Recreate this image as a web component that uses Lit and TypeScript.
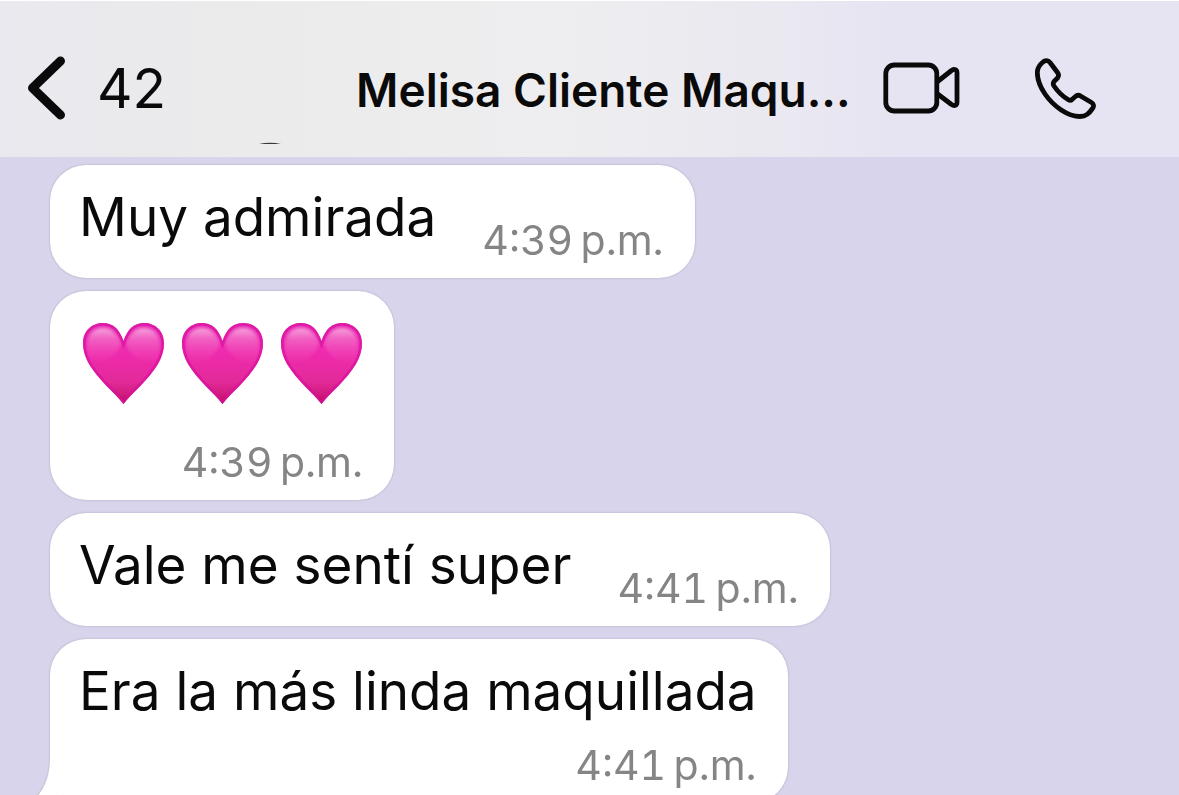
import { LitElement, html, css, svg } from "lit";
import { customElement, property } from "lit/decorators.js";

interface Message {
  text?: string;
  hearts?: number;
  time: string;
  stacked?: boolean;
  tail?: boolean;
}

const MESSAGES: Message[] = [
  { text: "Muy admirada", time: "4:39\u202fp.m." },
  { hearts: 3, time: "4:39\u202fp.m.", stacked: true },
  { text: "Vale me sentí super", time: "4:41\u202fp.m." },
  { text: "Era la más linda maquillada", time: "4:41\u202fp.m.", stacked: true, tail: true },
];

@customElement("pink-heart")
export class PinkHeart extends LitElement {
  static styles = css`
    :host {
      display: block;
      width: 81px;
      height: 82px;
    }
    .heart {
      display: block;
      width: 100%;
      height: 100%;
    }
  `;

  render() {
    const shape =
      "M40.500 82C32 71 15.500 58 6 42C2 35 0 28 0 21.500C0 8.500 9 1 20 1C30 1 36.500 7 40.500 19C44.500 7 51 1 61 1C72 1 81 8.500 81 21.500C81 28 79 35 75 42C65.500 58 49 71 40.500 82Z";
    return html`<svg class="heart" viewBox="0 0 81 82" role="img" aria-label="Corazón rosa">
      ${svg`
        <defs>
          <linearGradient id="base" x1="0" y1="0" x2="0" y2="1">
            <stop offset="0" stop-color="#e834b6" />
            <stop offset="0.4" stop-color="#ee2aac" />
            <stop offset="0.72" stop-color="#e32a9a" />
            <stop offset="0.88" stop-color="#d01c7e" />
            <stop offset="1" stop-color="#b80852" />
          </linearGradient>
          <linearGradient id="gloss" x1="0" y1="0" x2="0" y2="1">
            <stop offset="0" stop-color="#fff" stop-opacity="0.56" />
            <stop offset="0.3" stop-color="#ffc8e8" stop-opacity="0.32" />
            <stop offset="1" stop-color="#ff80cc" stop-opacity="0" />
          </linearGradient>
          <clipPath id="clip"><path d=${shape} /></clipPath>
          <filter id="soft" x="-20%" y="-20%" width="140%" height="140%"><feGaussianBlur stdDeviation="1.6" /></filter>
          <filter id="rim" x="-20%" y="-20%" width="140%" height="140%"><feGaussianBlur stdDeviation="0.7" /></filter>
        </defs>
        <path d=${shape} fill="url(#base)" />
        <g clip-path="url(#clip)">
          <g filter="url(#soft)">
            <path d="M4 24C4 12 11 6 20 6C29 6 34 12 38 21C36 32 22 42 9 42C5 36 4 29 4 24Z" fill="url(#gloss)" />
            <path d="M77 24C77 12 70 6 61 6C52 6 47 12 43 21C45 32 59 42 72 42C76 36 77 29 77 24Z" fill="url(#gloss)" />
          </g>
          <path d=${shape} fill="none" stroke="#d80b9f" stroke-width="5" stroke-opacity="0.7" filter="url(#rim)" />
        </g>
      `}
    </svg>`;
  }
}

@customElement("chat-bubble")
export class ChatBubble extends LitElement {
  @property({ attribute: false }) message!: Message;

  static styles = css`
    :host {
      display: block;
      position: relative;
      filter: drop-shadow(0 0 1px rgba(120, 112, 140, 0.45));
    }
    .bubble {
      display: flex;
      align-items: flex-end;
      gap: 46px;
      padding: 18px 31px 15px 29px;
      border-radius: 36px;
      background: #fff;
    }
    .stacked {
      flex-direction: column;
      gap: 0;
    }
    .text {
      margin: 0 0 12px;
      font-size: 53px;
      line-height: 68px;
      color: #0a0a0a;
      white-space: nowrap;
    }
    .stacked .text {
      margin-bottom: 17px;
    }
    .hearts {
      display: flex;
      gap: 18px;
      padding: 13px 1px 35px 4px;
    }
    .time {
      font-size: 41px;
      line-height: 46px;
      font-variant-numeric: tabular-nums;
      color: #858585;
      white-space: nowrap;
    }
    .tail {
      position: absolute;
      left: -18px;
      bottom: 0;
      width: 54px;
      height: 48px;
    }
  `;

  render() {
    const m = this.message;
    return html`
      ${m.tail
        ? html`<svg class="tail" viewBox="0 0 54 48" aria-hidden="true">
            <path d="M18 0C18 18 15 31 3 44C1 46 2 48 5 48C15 47 24 45 30 40L54 34V0Z" fill="#fff" />
          </svg>`
        : null}
      <div class="bubble ${m.stacked ? "stacked" : ""}">
        ${m.hearts
          ? html`<div class="hearts">${Array.from({ length: m.hearts }, () => html`<pink-heart></pink-heart>`)}</div>`
          : html`<p class="text">${m.text}</p>`}
        <time class="time">${m.time}</time>
      </div>
    `;
  }
}

@customElement("app-root")
export class AppRoot extends LitElement {
  static styles = css`
    :host {
      display: flex;
      flex-direction: column;
      height: 100vh;
      overflow: hidden;
      background: #d8d4eb;
      font-family: Inter, "Liberation Sans", sans-serif;
    }
    .bar {
      flex: none;
      display: flex;
      align-items: center;
      box-sizing: border-box;
      height: 157px;
      padding: 18px 83px 0 28px;
      border-top: 1px solid #fff;
      background: linear-gradient(90deg, #e9e9ef 0, #ebebeb 22%, #eeeef0 46%, #ebe9f0 64%, #e6e4f2 76%, #e6e4f2 100%);
      color: #0a0a0a;
    }
    .button {
      flex: none;
      display: flex;
      align-items: center;
      padding: 0;
      border: 0;
      background: none;
      color: inherit;
      font: inherit;
      cursor: pointer;
    }
    .back {
      gap: 31px;
      font-size: 55px;
      line-height: 64px;
    }
    .chevron {
      width: 38px;
      height: 64px;
    }
    .avatar {
      flex: none;
      align-self: flex-end;
      width: 190px;
      height: 16px;
    }
    .title {
      flex: 1;
      min-width: 0;
      margin: 0;
      padding-top: 4px;
      overflow: hidden;
      font-size: 46px;
      line-height: 64px;
      font-weight: 600;
      white-space: nowrap;
    }
    .actions {
      flex: none;
      display: flex;
      align-items: center;
      gap: 75px;
    }
    .video {
      width: 77px;
      height: 52px;
    }
    .phone {
      width: 61px;
      height: 61px;
    }
    .thread {
      display: flex;
      flex-direction: column;
      align-items: flex-start;
      gap: 13px;
      padding: 8px 50px 0;
    }
  `;

  render() {
    return html`
      <header class="bar">
        <button class="button back" aria-label="Volver, 42 chats sin leer">
          <svg class="chevron" viewBox="0 0 38 64" fill="none" aria-hidden="true">
            <path d="M32.500 5L4.500 32L32.500 59" stroke="currentColor" stroke-width="9" stroke-linecap="round" stroke-linejoin="round" />
          </svg>
          <span>42</span>
        </button>
        <svg class="avatar" viewBox="0 0 190 16" aria-hidden="true">
          <path d="M93 3Q104 0.500 115 3Z" fill="#38383c" />
        </svg>
        <h1 class="title">Melisa Cliente Maqu...</h1>
        <div class="actions">
          <button class="button" aria-label="Videollamada">
            <svg class="video" viewBox="0 0 77 52" fill="none" stroke="currentColor" stroke-width="4.800" stroke-linejoin="round" aria-hidden="true">
              <rect x="2.800" y="3" width="51" height="46" rx="8.500" />
              <path d="M54 20L68.500 8.500C71.500 6.500 74 7.500 74 11V40C74 43.500 71.500 44.500 68.500 42.500L54 31.500" />
            </svg>
          </button>
          <button class="button" aria-label="Llamada">
            <svg class="phone" viewBox="0 0 61 61" fill="none" stroke="currentColor" stroke-width="4.800" stroke-linejoin="round" aria-hidden="true">
              <path d="M8 4C10 2 13 2 15 4.500L22.500 14.500C24 16.500 24 18 22.500 20L19 23.500C18 25 18 26.500 19 28C23 34 28 38.500 33 41.500C34.500 42.500 36 42.500 37 41.500L41 38C42.500 37 44 37 45.500 38L56.500 44.500C59 46 59 48.500 57.500 50.500C54 55.500 51 58.500 45 58.500C33 58.500 18.500 48.500 10 36C4.500 28 2.300 21 2.300 14.500C2.300 10 5 6.500 8 4Z" />
            </svg>
          </button>
        </div>
      </header>
      <main class="thread">
        ${MESSAGES.map((m) => html`<chat-bubble .message=${m}></chat-bubble>`)}
      </main>
    `;
  }
}
